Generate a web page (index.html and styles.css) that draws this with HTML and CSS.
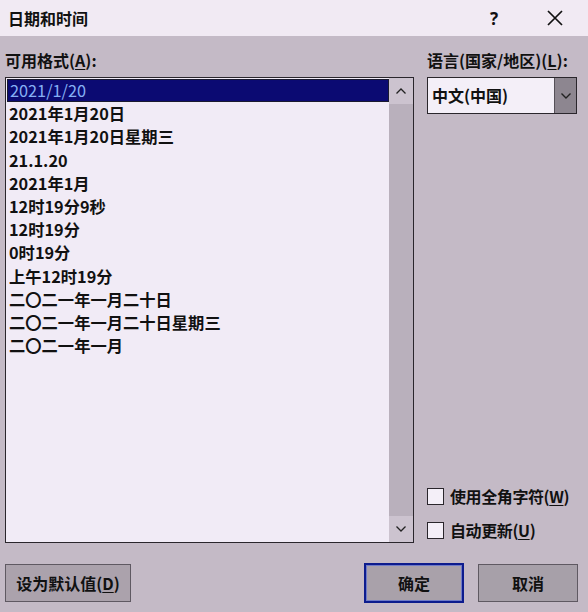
FILE: index.html
```html
<!DOCTYPE html>
<html lang="zh-CN">
<head>
<meta charset="utf-8">
<title>日期和时间</title>
<link rel="stylesheet" href="styles.css">
</head>
<body>
<div class="dialog">
  <div class="titlebar">
    <span class="title">日期和时间</span>
    <span class="help">?</span>
    <span class="close">
      <svg width="18" height="18" viewBox="0 0 18 18"><path d="M2 2 L16 16 M16 2 L2 16" stroke="#111" stroke-width="1.7" fill="none"/></svg>
    </span>
  </div>
  <div class="content">
    <div class="left">
      <div class="label">可用格式(<u>A</u>):</div>
      <div class="listbox">
        <ul class="items">
          <li class="selected">2021/1/20</li>
          <li>2021年1月20日</li>
          <li>2021年1月20日星期三</li>
          <li>21.1.20</li>
          <li>2021年1月</li>
          <li>12时19分9秒</li>
          <li>12时19分</li>
          <li>0时19分</li>
          <li>上午12时19分</li>
          <li>二〇二一年一月二十日</li>
          <li>二〇二一年一月二十日星期三</li>
          <li>二〇二一年一月</li>
        </ul>
        <div class="scrollbar">
          <svg class="arrow" width="12" height="8" viewBox="0 0 12 8"><path d="M1.5 6.5 L6 2 L10.5 6.5" stroke="#222" stroke-width="1.3" fill="none"/></svg>
          <div class="track"></div>
          <svg class="arrow" width="12" height="8" viewBox="0 0 12 8"><path d="M1.5 1.5 L6 6 L10.5 1.5" stroke="#222" stroke-width="1.3" fill="none"/></svg>
        </div>
      </div>
    </div>
    <div class="right">
      <div class="label">语言(国家/地区)(<u>L</u>):</div>
      <div class="combo">
        <span class="combo-text">中文(中国)</span>
        <span class="combo-btn">
          <svg width="12" height="8" viewBox="0 0 12 8"><path d="M1.5 1.5 L6 6 L10.5 1.5" stroke="#222" stroke-width="1.4" fill="none"/></svg>
        </span>
      </div>
      <div class="spacer"></div>
      <label class="check"><span class="box"></span>使用全角字符(<u>W</u>)</label>
      <label class="check"><span class="box"></span>自动更新(<u>U</u>)</label>
    </div>
  </div>
  <div class="buttons">
    <button class="btn btn-default">设为默认值(<u>D</u>)</button>
    <div class="btn-group">
      <button class="btn btn-ok">确定</button>
      <button class="btn btn-cancel">取消</button>
    </div>
  </div>
</div>
</body>
</html>
```

FILE: styles.css
```css
* { box-sizing: border-box; }
html, body { margin: 0; padding: 0; }
body {
  width: 588px;
  height: 612px;
  background: #c4bac6;
  font-family: "Noto Sans CJK SC", "Noto Sans", sans-serif;
  font-size: 16px;
  font-weight: bold;
  color: #111;
  overflow: hidden;
}
.dialog { display: flex; flex-direction: column; height: 612px; }
.titlebar {
  height: 36px;
  background: #f1eaf3;
  display: flex;
  align-items: center;
  padding-left: 8px;
}
.title { font-size: 16px; }
.help {
  margin-left: auto;
  font-family: "Noto Sans", sans-serif;
  font-size: 17px;
  width: 20px;
  text-align: center;
}
.close { margin-left: 42px; margin-right: 24px; width: 18px; height: 18px; display: flex; }
.content {
  display: flex;
  height: 507px;
  padding: 13px 11px 0 5px;
  gap: 13px;
}
.label { line-height: 22px; height: 22px; white-space: nowrap; }
u { text-decoration-thickness: 1px; text-underline-offset: 2px; }
.left { width: 409px; display: flex; flex-direction: column; }
.listbox {
  margin-top: 6px;
  height: 466px;
  border: 1px solid #2a262c;
  background: #f1ebf6;
  display: flex;
}
.items {
  list-style: none;
  margin: 0;
  padding: 1px 0 0 1px;
  flex: 1;
}
.items li {
  height: 23.2px;
  line-height: 23px;
  padding-left: 2px;
  font-size: 16.3px;
  white-space: nowrap;
}
.items li.selected {
  background: #0b0a72;
  color: #86b0f4;
  font-weight: 400;
  border: 1px solid #1a1a30;
  line-height: 21px;
}
.scrollbar {
  width: 24px;
  display: flex;
  flex-direction: column;
  align-items: center;
  background: #ccc3cf;
}
.scrollbar .arrow { margin: 9px 0; flex: none; }
.track { flex: 1; width: 100%; background: #b9b0bc; }
.right { width: 150px; display: flex; flex-direction: column; }
.combo {
  margin-top: 6px;
  height: 37px;
  border: 1px solid #2a262c;
  background: #f4eff8;
  display: flex;
}
.combo-text { flex: 1; line-height: 35px; padding-left: 4px; }
.combo-btn {
  width: 22px;
  background: #8d8690;
  border-left: 1px solid #555058;
  display: flex;
  align-items: center;
  justify-content: center;
}
.spacer { flex: 1; }
.check {
  display: flex;
  align-items: center;
  height: 22px;
  white-space: nowrap;
  letter-spacing: -0.4px;
}
.check + .check { margin-top: 12px; }
.check:last-child { margin-bottom: 2px; }
.box {
  width: 17px;
  height: 17px;
  border: 1px solid #2a262c;
  background: #f4eff8;
  margin: 0 6px 0 0;
  flex: none;
}
.buttons {
  display: flex;
  align-items: center;
  padding: 20px 10px 0 5px;
}
.btn {
  font-family: inherit;
  font-size: 16px;
  font-weight: bold;
  color: #111;
  height: 38px;
  border: 1px solid #5f5962;
  background: #aba2ac;
  padding: 0;
}
.btn-default { width: 126px; }
.btn-group { margin-left: auto; display: flex; align-items: center; gap: 14px; }
.btn-ok {
  width: 100px;
  height: 40px;
  border: 2px solid #0d1c8e;
  box-shadow: inset 0 0 0 1px #6f7bc8;
  background: #a9a1aa;
}
.btn-cancel { width: 100px; background: #a7a0a9; }
```
